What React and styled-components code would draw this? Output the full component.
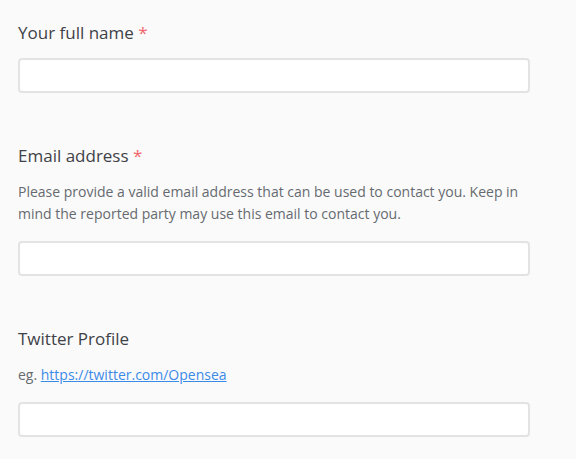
import React from 'react'
import styled, { createGlobalStyle } from 'styled-components'

const GlobalStyle = createGlobalStyle`
  body {
    margin: 0;
    background: #fafafa;
    font-family: 'Open Sans', 'Noto Sans', sans-serif;
  }
`

const Form = styled.form`
  display: flex;
  flex-direction: column;
  gap: 51px;
  padding: 21px 46px 0 18px;
`

const Field = styled.div`
  display: flex;
  flex-direction: column;
`

const Label = styled.label`
  font-size: 17px;
  line-height: 24px;
  color: #3f4248;
  margin-bottom: 13px;

  span {
    color: #f0656b;
  }
`

const Hint = styled.p`
  margin: 0 0 16px;
  font-size: 14px;
  line-height: 22px;
  color: #666a70;

  a {
    color: #3a8ae8;
    text-decoration: underline;
  }
`

const Input = styled.input`
  box-sizing: border-box;
  width: 512px;
  height: 35px;
  border: 2px solid #e3e3e3;
  border-radius: 4px;
  background: #fff;
  outline: none;
  padding: 0 10px;
  font-family: inherit;
  font-size: 14px;
`

export default function App() {
  return (
    <>
      <GlobalStyle />
      <Form>
        <Field>
          <Label>Your full name <span>*</span></Label>
          <Input type="text" />
        </Field>
        <Field>
          <Label>Email address <span>*</span></Label>
          <Hint>
            Please provide a valid email address that can be used to contact you. Keep in
            mind the reported party may use this email to contact you.
          </Hint>
          <Input type="email" />
        </Field>
        <Field>
          <Label>Twitter Profile</Label>
          <Hint>
            eg. <a href="#">https://twitter.com/Opensea</a>
          </Hint>
          <Input type="text" />
        </Field>
      </Form>
    </>
  )
}
